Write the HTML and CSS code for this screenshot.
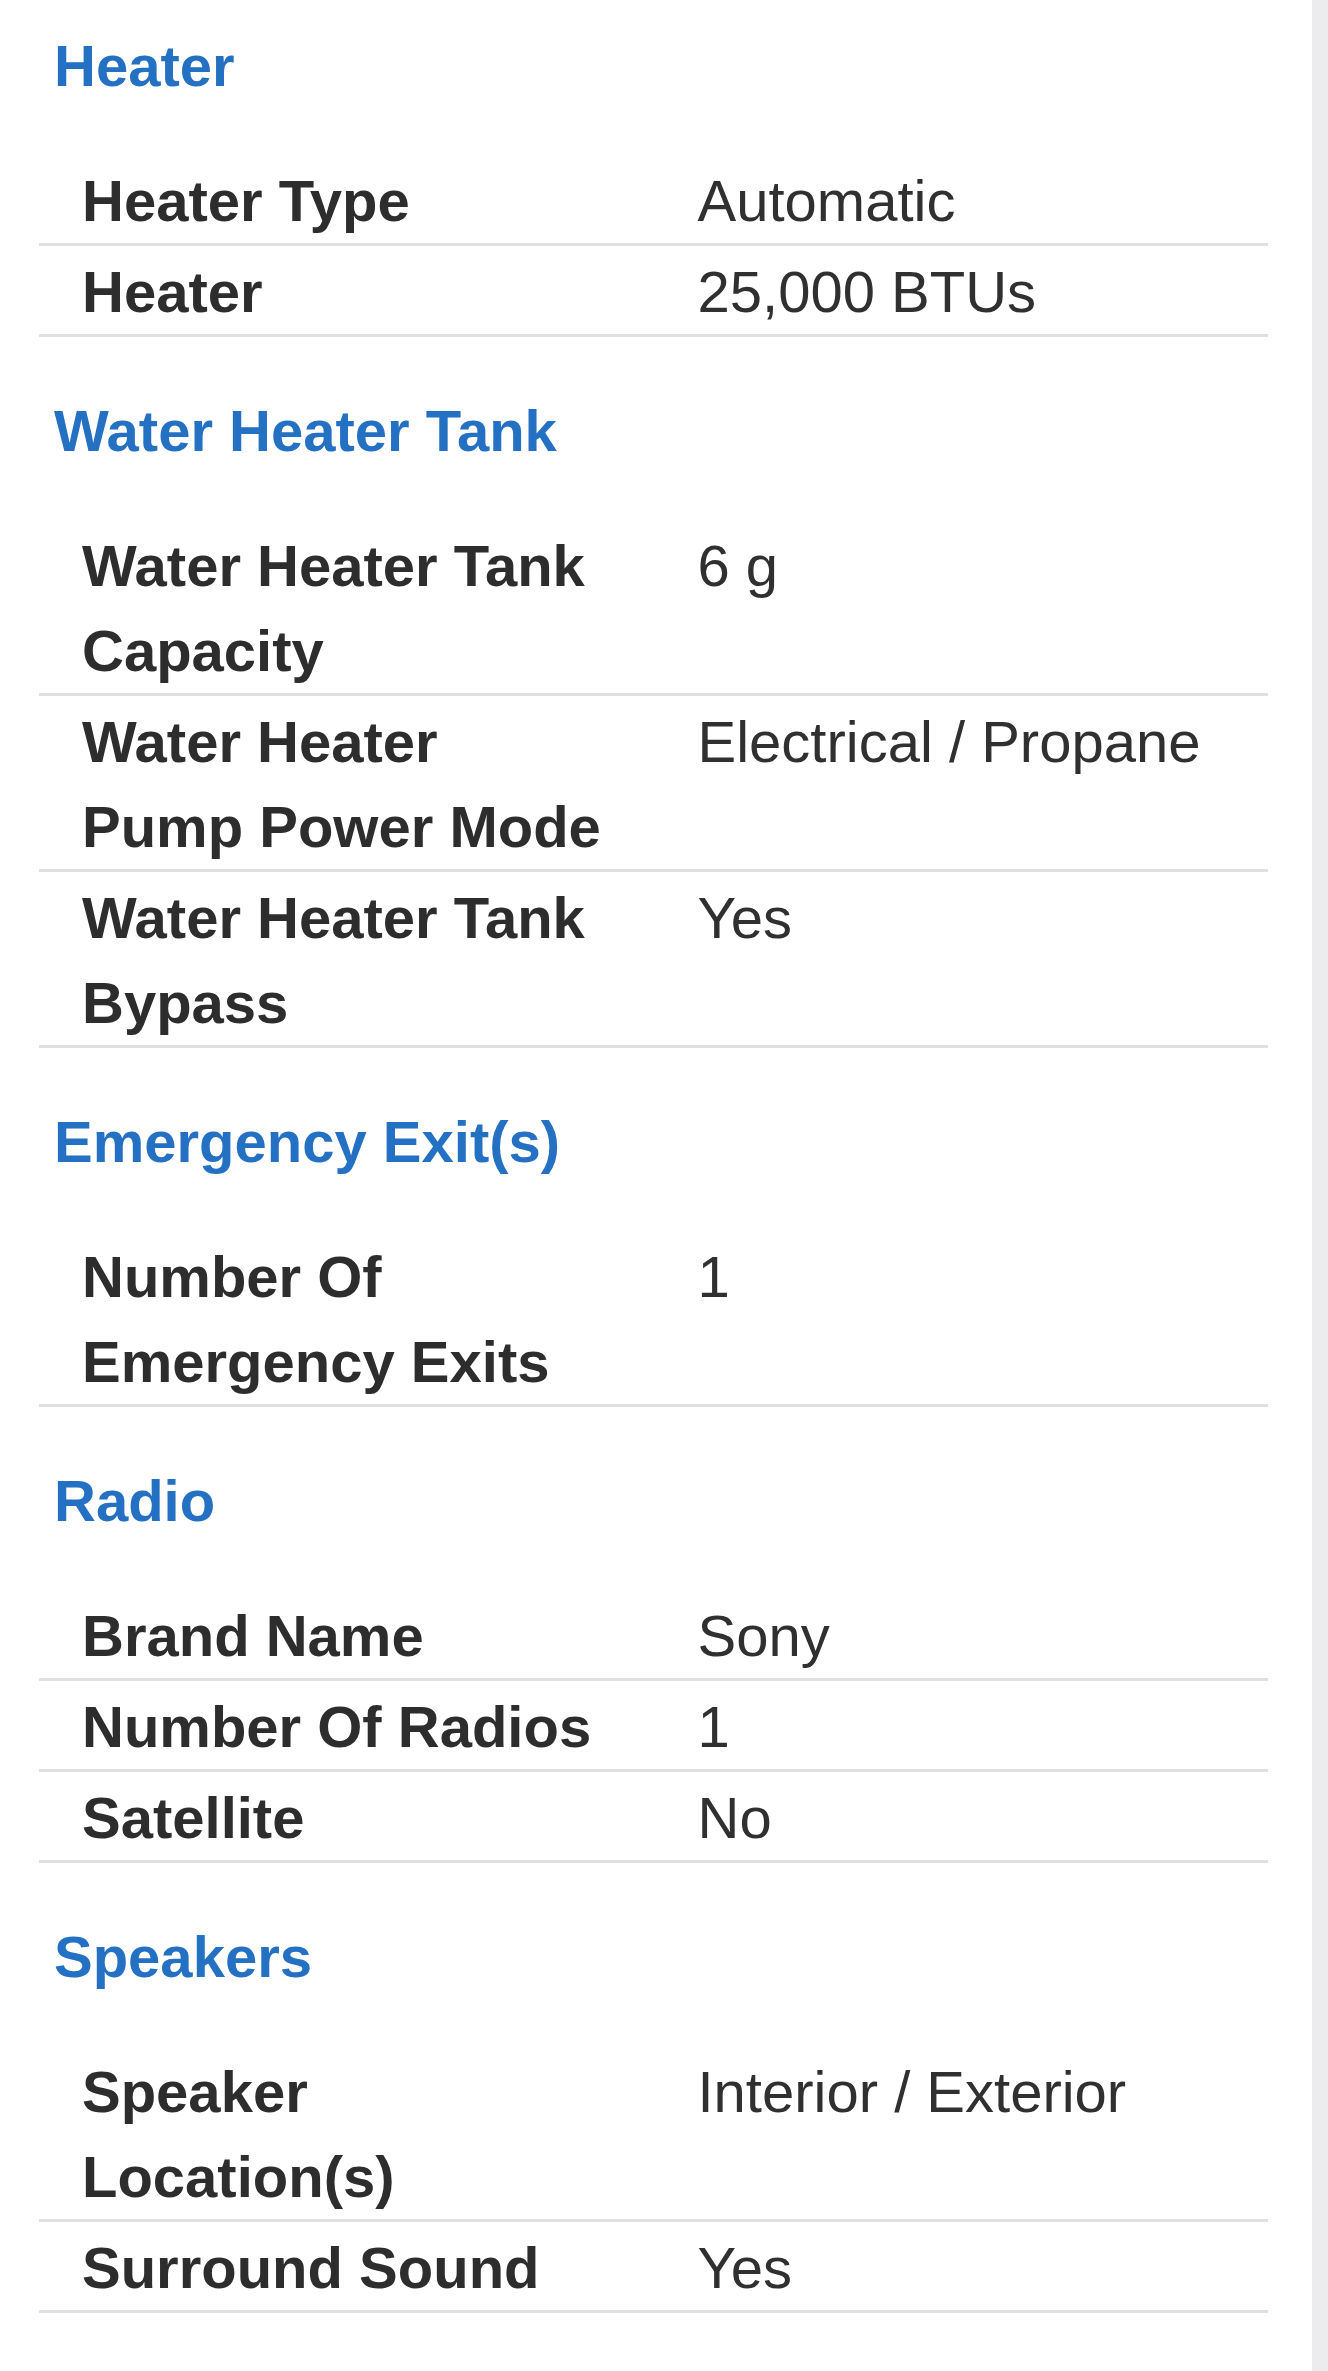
FILE: index.html
```html
<!DOCTYPE html>
<html lang="en">
<head>
  <meta charset="UTF-8">
  <meta name="viewport" content="width=device-width, initial-scale=1.0">
  <title>Specifications</title>
  <link rel="stylesheet" href="styles.css">
</head>
<body>
  <main class="specs">
    <section class="spec-group">
      <h2>Heater</h2>
      <div class="spec-row">
        <div class="spec-label">Heater Type</div>
        <div class="spec-value">Automatic</div>
      </div>
      <div class="spec-row">
        <div class="spec-label">Heater</div>
        <div class="spec-value">25,000 BTUs</div>
      </div>
    </section>

    <section class="spec-group">
      <h2>Water Heater Tank</h2>
      <div class="spec-row">
        <div class="spec-label">Water Heater Tank Capacity</div>
        <div class="spec-value">6 g</div>
      </div>
      <div class="spec-row">
        <div class="spec-label">Water Heater Pump Power Mode</div>
        <div class="spec-value">Electrical / Propane</div>
      </div>
      <div class="spec-row">
        <div class="spec-label">Water Heater Tank Bypass</div>
        <div class="spec-value">Yes</div>
      </div>
    </section>

    <section class="spec-group">
      <h2>Emergency Exit(s)</h2>
      <div class="spec-row">
        <div class="spec-label">Number Of Emergency Exits</div>
        <div class="spec-value">1</div>
      </div>
    </section>

    <section class="spec-group">
      <h2>Radio</h2>
      <div class="spec-row">
        <div class="spec-label">Brand Name</div>
        <div class="spec-value">Sony</div>
      </div>
      <div class="spec-row">
        <div class="spec-label">Number Of Radios</div>
        <div class="spec-value">1</div>
      </div>
      <div class="spec-row">
        <div class="spec-label">Satellite</div>
        <div class="spec-value">No</div>
      </div>
    </section>

    <section class="spec-group">
      <h2>Speakers</h2>
      <div class="spec-row">
        <div class="spec-label">Speaker Location(s)</div>
        <div class="spec-value">Interior / Exterior</div>
      </div>
      <div class="spec-row">
        <div class="spec-label">Surround Sound</div>
        <div class="spec-value">Yes</div>
      </div>
    </section>
  </main>
</body>
</html>
```

FILE: styles.css
```css
html {
  background-color: #ececee;
}
body {
  margin: 0 16px 0 0;
  min-height: 100vh;
  background-color: #ffffff;
  font-family: "Liberation Sans", Arial, sans-serif;
  font-size: 58px;
  color: #2d2d2d;
}
.specs {
  padding: 23px 44px 40px 39px;
}
.spec-group {
  margin-bottom: 51px;
}
.spec-group h2 {
  margin: 0 0 47px;
  padding-left: 15px;
  font-size: 58px;
  line-height: 85px;
  font-weight: 700;
  color: #2471c4;
}
.spec-row {
  display: grid;
  grid-template-columns: 1fr 1fr;
  padding-top: 3px;
  line-height: 85px;
  border-bottom: 3px solid #e0e0e0;
}
.spec-label {
  padding: 0 45px 0 43px;
  font-weight: 700;
}
.spec-value {
  padding-left: 44px;
  color: #303030;
}
```
